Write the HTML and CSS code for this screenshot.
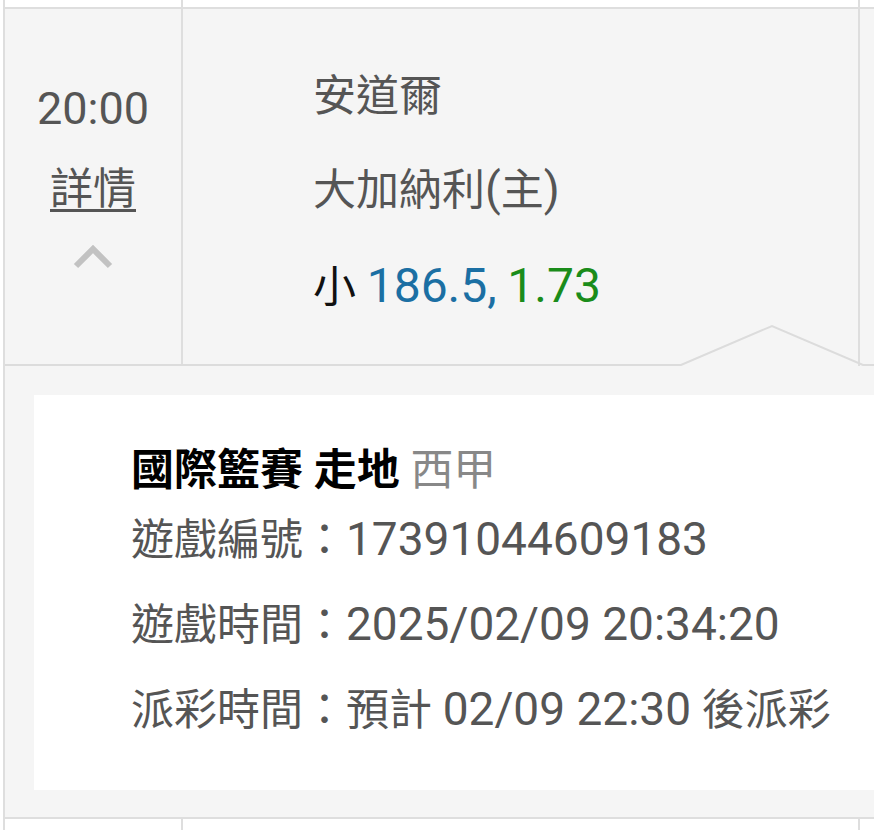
FILE: index.html
```html
<!DOCTYPE html>
<html lang="zh-Hant">
<head>
  <meta charset="UTF-8">
  <title>注單詳情</title>
  <meta name="viewport" content="width=device-width, initial-scale=1">
  <link rel="stylesheet" href="styles.css">
</head>
<body>
  <div class="board">
    <!-- previous row (cut off) -->
    <div class="row row-prev">
      <div class="cell cell-time"></div>
      <div class="cell cell-teams"></div>
      <div class="cell cell-rest"></div>
    </div>

    <div class="row row-open">
      <div class="cell cell-time">
        <div class="time">20:00</div>
        <a class="detail-link" href="#">詳情</a>
        <svg class="chevron" width="40" height="24" viewBox="0 0 40 24">
          <polyline points="3,21 20,4 37,21" fill="none" stroke="#c2c2c2" stroke-width="6"/>
        </svg>
      </div>
      <div class="cell cell-teams">
        <div class="team">安道爾</div>
        <div class="team">大加納利<span class="num">(</span>主<span class="num">)</span></div>
        <div class="bet">小 <span class="line">186.5,</span> <span class="odds">1.73</span></div>
      </div>
      <div class="cell cell-rest"></div>
      <svg class="notch" width="874" height="42" viewBox="0 0 874 42">
        <polyline points="-5,41 676,41 767,2 858,41 880,41" fill="none" stroke="#dcdcdc" stroke-width="2"/>
      </svg>
    </div>

    <div class="detail">
      <div class="detail-card">
        <div class="detail-title">國際籃賽 走地 <span class="league">西甲</span></div>
        <div class="info">遊戲編號：<span class="num">17391044609183</span></div>
        <div class="info">遊戲時間：<span class="num">2025/02/09 20:34:20</span></div>
        <div class="info">派彩時間：預計 <span class="num">02/09 22:30</span> 後派彩</div>
      </div>
    </div>

    <!-- next row (cut off) -->
    <div class="row row-next">
      <div class="cell cell-time"></div>
      <div class="cell cell-teams"></div>
      <div class="cell cell-rest"></div>
    </div>
  </div>
</body>
</html>
```

FILE: styles.css
```css
body {
  margin: 0;
  background: #fff;
  font-family: Roboto, "Noto Sans CJK TC", sans-serif;
  color: #555;
  overflow: hidden;
}
.board {
  margin-left: 3px;
  border-left: 2px solid #dedede;
  width: 869px;
  height: 830px;
  display: flex; flex-direction: column;
  font-size: 43px;
}
.num { font-size: 46px; line-height: 1; }

.row { display: flex; position: relative; }
.cell { box-sizing: border-box; }
.cell-time { width: 178px; border-right: 2px solid #dedede; text-align: center; }
.cell-teams { width: 677px; border-right: 2px solid #dedede; }
.cell-rest { flex: 1; }

.row-prev { height: 7px; }
.row-open {
  height: 359px;
  box-sizing: border-box;
  border-top: 2px solid #dedede;
  background: #f5f5f5;
}
.row-next {
  flex: 1;
  border-top: 2px solid #dedede;
}

.row-open .cell-time { padding-top: 60px; }
.time { font-size: 45px; line-height: 80px; }
.detail-link {
  display: block;
  line-height: 80px;
  color: #555;
  text-decoration: underline;
  text-decoration-thickness: 3px;
  text-underline-offset: 5px;
}
.chevron { display: block; margin: 16px auto 0; }

.row-open .cell-teams { padding: 40px 0 0 130px; }
.team, .bet { line-height: 94px; }
.bet { margin-top: 3px; color: #111; }
.bet .line, .bet .odds { font-size: 48px; line-height: 1; }
.bet .line { color: #1b6fa3; }
.bet .odds { color: #1a8c1a; }

.notch { position: absolute; left: 0; bottom: 0; pointer-events: none; }

.detail {
  background: #f5f5f5;
  padding: 29px 0 27px 29px;
}
.detail-card {
  background: #fff;
  padding: 40px 0 45px 97px;
}
.detail-title { line-height: 70px; font-weight: bold; color: #000; }
.detail-title .league { font-weight: normal; color: #888; }
.info { line-height: 70px; color: #555; }
.info + .info { margin-top: 15px; }
```
